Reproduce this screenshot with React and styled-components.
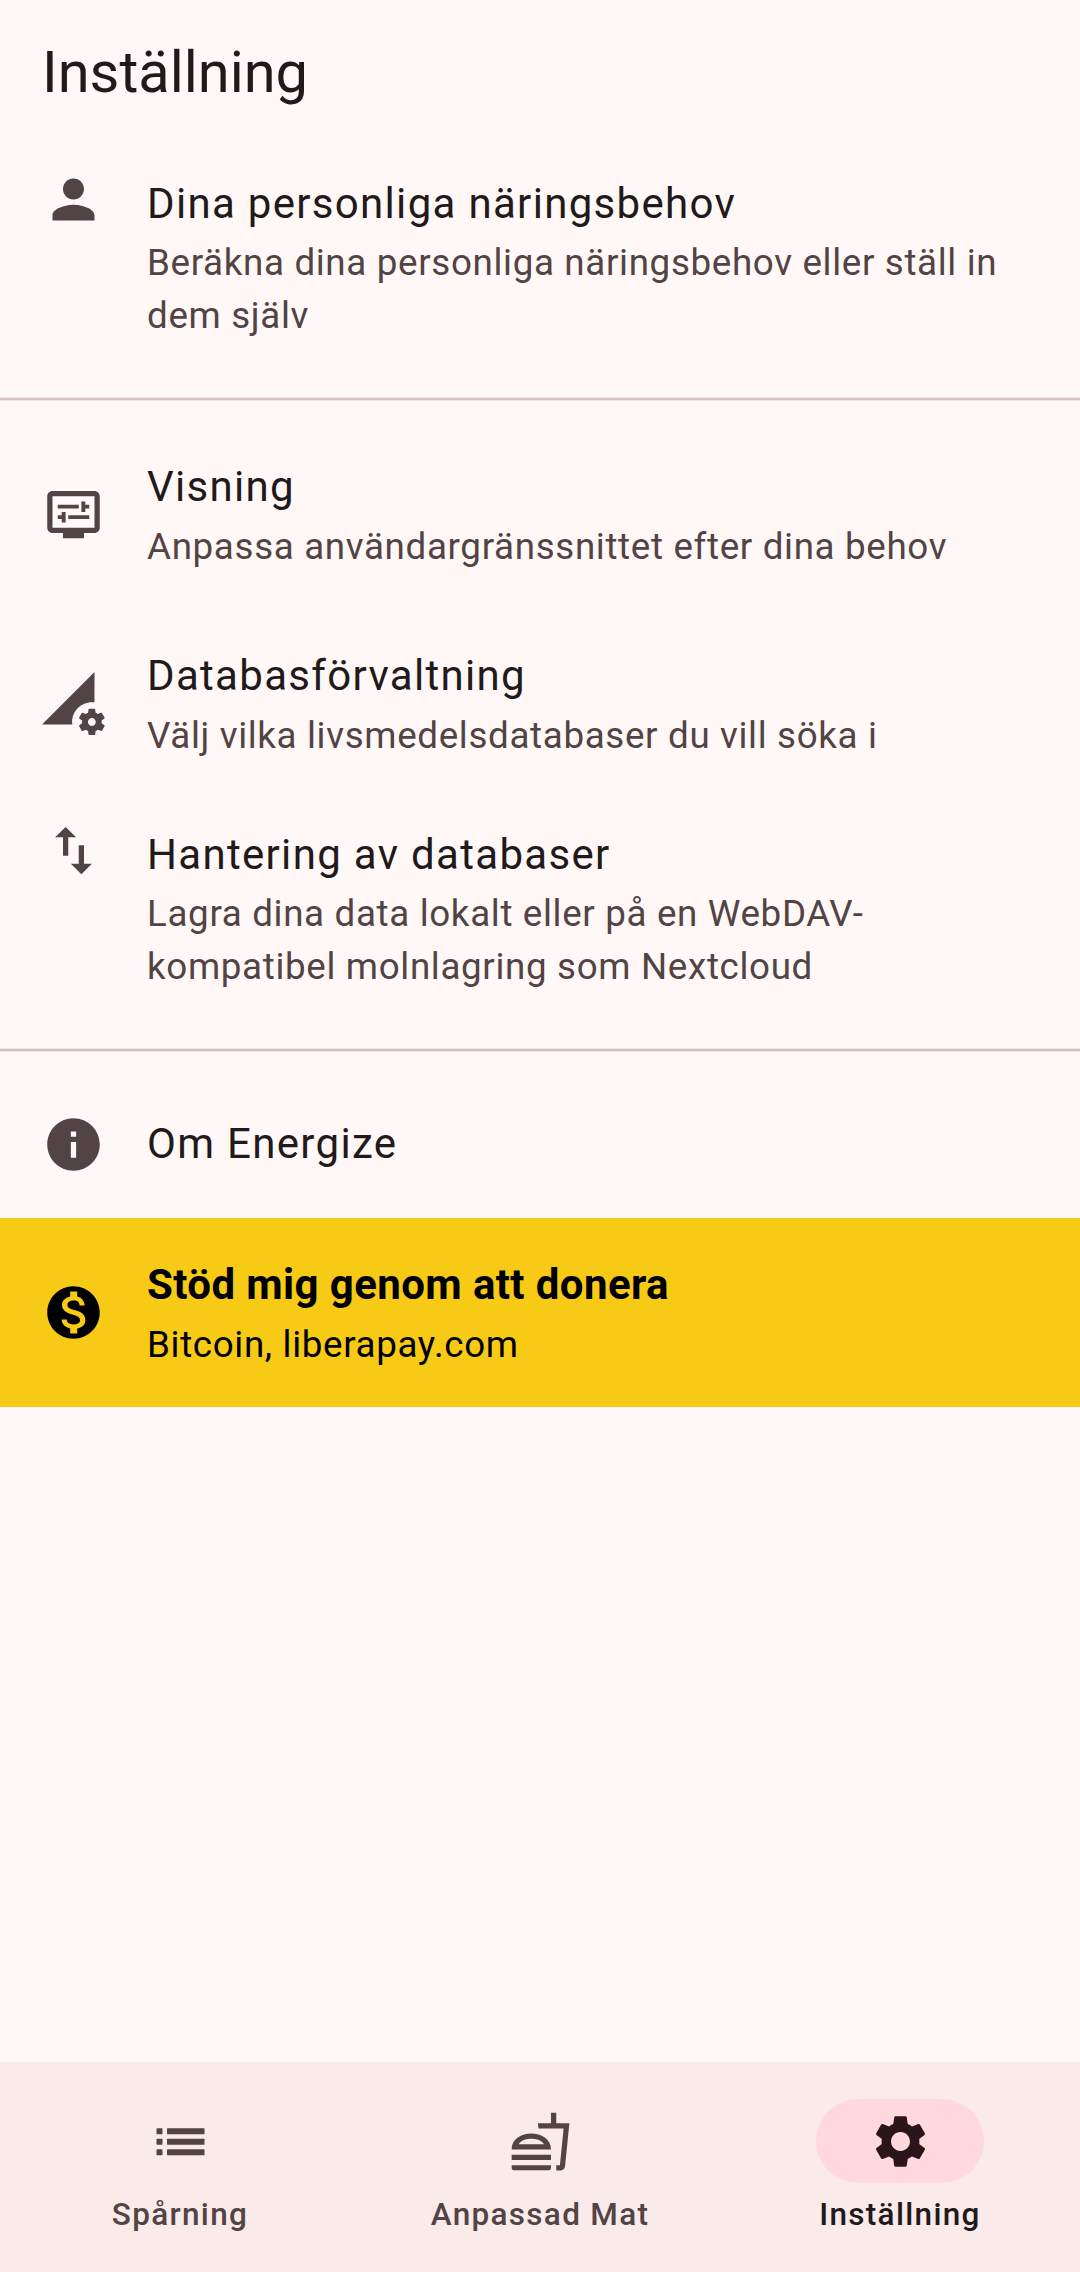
import React from "react";
import styled, { createGlobalStyle } from "styled-components";
import {
  MdPerson,
  MdPermDataSetting,
  MdImportExport,
  MdInfo,
  MdMonetizationOn,
  MdOutlineFastfood,
  MdSettings,
} from "react-icons/md";

const GlobalStyle = createGlobalStyle`
  *, *::before, *::after { box-sizing: border-box; }
  body {
    margin: 0;
    background: #fff8f7;
    font-family: Roboto, "Noto Sans", sans-serif;
    color: #22191b;
  }
`;

const Screen = styled.div`
  display: flex;
  flex-direction: column;
  width: 1080px;
  height: 2272px;
  background: #fff8f7;
`;

const AppBar = styled.header`
  display: flex;
  align-items: center;
  height: 147px;
  padding: 0 42px 4px;
`;

const PageTitle = styled.h1`
  margin: 0;
  font-size: 57.75px;
  font-weight: 400;
  line-height: 74px;
`;

const SettingsList = styled.main`
  display: flex;
  flex-direction: column;
  flex: 1;
`;

const heights = { 1: 147, 2: 189, 3: 231 };

const Tile = styled.div`
  display: flex;
  gap: 42px;
  height: ${(p) => heights[p.$lines]}px;
  padding: ${(p) => (p.$lines === 3 ? "21px 63px 0 42px" : "0 63px 0 42px")};
  align-items: ${(p) => (p.$lines === 3 ? "flex-start" : "center")};
  background: ${(p) => (p.$highlight ? "#f6ca15" : "transparent")};
  color: ${(p) => (p.$highlight ? "#000" : "#22191b")};
  --muted: ${(p) => (p.$highlight ? "#000" : "#524345")};
`;

const TileIcon = styled.span`
  display: flex;
  flex: none;
  width: 63px;
  height: 63px;
  color: var(--muted);
  svg { width: 63px; height: 63px; }
`;

const textPadding = { 1: "0 0 2px", 2: "0 0 1px", 3: "4px 0 0" };

const TileText = styled.div`
  display: flex;
  flex-direction: column;
  flex: 1;
  gap: ${(p) => (p.$lines === 3 ? 2 : 3)}px;
  padding: ${(p) => textPadding[p.$lines]};
`;

const TileTitle = styled.div`
  font-size: 42px;
  line-height: 63px;
  letter-spacing: ${(p) => (p.$bold ? 0.394 : 1.3125)}px;
  font-weight: ${(p) => (p.$bold ? 700 : 400)};
`;

const TileSubtitle = styled.div`
  font-size: 36.75px;
  line-height: 52.5px;
  letter-spacing: 0.656px;
  color: var(--muted);
`;

const Divider = styled.div`
  display: flex;
  align-items: center;
  height: 42px;
  &::before {
    content: "";
    flex: 1;
    height: 4px;
    background: linear-gradient(#f1e5e5 0 1px, #d6c2c4 1px 3px, #f1e5e5 3px 4px);
  }
`;

const NavBar = styled.nav`
  display: grid;
  grid-template-columns: repeat(3, 1fr);
  height: 210px;
  background: #faeaea;
`;

const NavItem = styled.div`
  display: flex;
  flex-direction: column;
  align-items: center;
  gap: 11px;
  padding-top: 37px;
  color: ${(p) => (p.$active ? "#22191b" : "#524345")};
`;

const Indicator = styled.span`
  display: flex;
  align-items: center;
  justify-content: center;
  width: 168px;
  height: 84px;
  border-radius: 42px;
  background: ${(p) => (p.$active ? "#ffd9de" : "transparent")};
  color: ${(p) => (p.$active ? "#2b151a" : "#524345")};
  svg { width: 63px; height: 63px; }
`;

const NavLabel = styled.span`
  font-size: 31.5px;
  line-height: 42px;
  font-weight: 500;
  letter-spacing: 1.3125px;
`;

const DisplaySettingsIcon = () => (
  <svg viewBox="0 0 24 24" fill="currentColor">
    <path d="M20 3H4c-1.1 0-2 .9-2 2v12c0 1.1.9 2 2 2h4v2h8v-2h4c1.1 0 2-.9 2-2V5c0-1.1-.9-2-2-2zm0 14H4V5h16v12z" />
    <path d="M6 8.25h8v1.5H6zM16.5 9.75H18v-1.5h-1.5V7H15v4h1.5zM10 12.25h8v1.5h-8zM7.5 15H9v-4H7.5v1.25H6v1.5h1.5z" />
  </svg>
);

const ListIcon = () => (
  <svg viewBox="0 0 24 24" fill="currentColor">
    {[8.1, 12.1, 16.1].map((y) => (
      <React.Fragment key={y}>
        <rect x="2.86" y={y - 1.13} width="2.28" height="2.26" rx="0.25" />
        <rect x="6.86" y={y - 1.13} width="14.28" height="2.26" rx="0.2" />
      </React.Fragment>
    ))}
  </svg>
);

const Item = ({ icon: Icon, title, subtitle, lines, highlight }) => (
  <Tile $lines={lines} $highlight={highlight}>
    <TileIcon><Icon /></TileIcon>
    <TileText $lines={lines}>
      <TileTitle $bold={highlight}>{title}</TileTitle>
      {subtitle && <TileSubtitle>{subtitle}</TileSubtitle>}
    </TileText>
  </Tile>
);

const tabs = [
  { label: "Spårning", icon: ListIcon },
  { label: "Anpassad Mat", icon: MdOutlineFastfood },
  { label: "Inställning", icon: MdSettings, active: true },
];

export default function App() {
  return (
    <Screen>
      <GlobalStyle />
      <AppBar>
        <PageTitle>Inställning</PageTitle>
      </AppBar>
      <SettingsList>
        <Item lines={3} icon={MdPerson} title="Dina personliga näringsbehov" subtitle="Beräkna dina personliga näringsbehov eller ställ in dem själv" />
        <Divider />
        <Item lines={2} icon={DisplaySettingsIcon} title="Visning" subtitle="Anpassa användargränssnittet efter dina behov" />
        <Item lines={2} icon={MdPermDataSetting} title="Databasförvaltning" subtitle="Välj vilka livsmedelsdatabaser du vill söka i" />
        <Item lines={3} icon={MdImportExport} title="Hantering av databaser" subtitle="Lagra dina data lokalt eller på en WebDAV-kompatibel molnlagring som Nextcloud" />
        <Divider />
        <Item lines={1} icon={MdInfo} title="Om Energize" />
        <Item lines={2} icon={MdMonetizationOn} title="Stöd mig genom att donera" subtitle="Bitcoin, liberapay.com" highlight />
      </SettingsList>
      <NavBar>
        {tabs.map(({ label, icon: Icon, active }) => (
          <NavItem key={label} $active={active}>
            <Indicator $active={active}><Icon /></Indicator>
            <NavLabel>{label}</NavLabel>
          </NavItem>
        ))}
      </NavBar>
    </Screen>
  );
}
